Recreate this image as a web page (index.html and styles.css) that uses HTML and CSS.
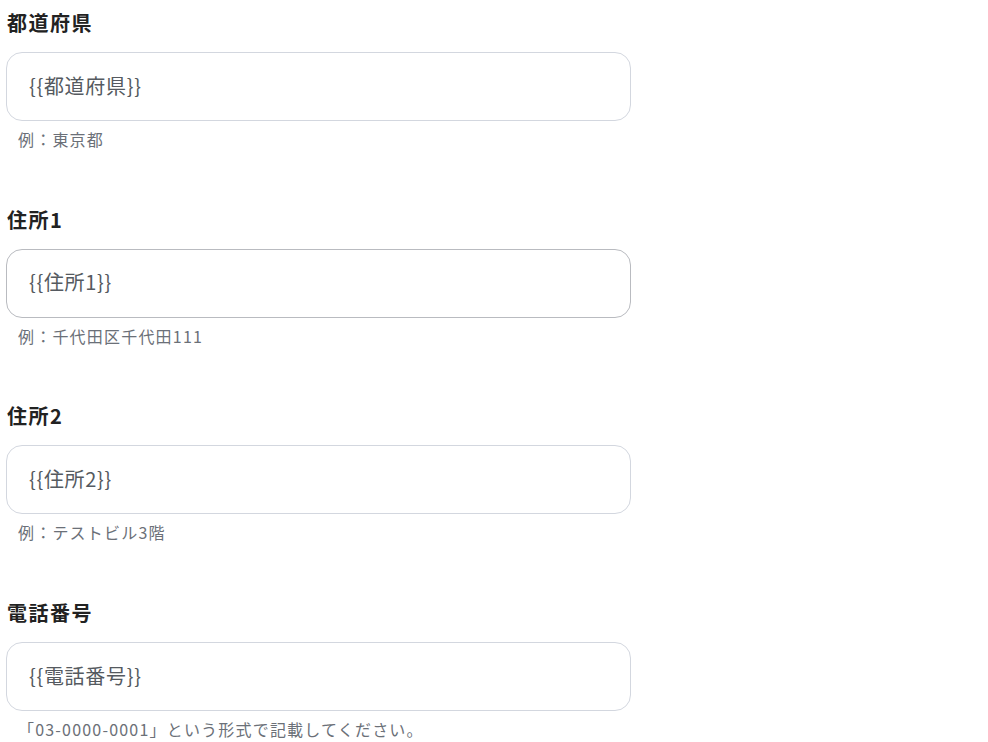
FILE: index.html
```html
<!DOCTYPE html>
<html lang="ja">
<head>
<meta charset="utf-8">
<link rel="stylesheet" href="styles.css">
</head>
<body>
<form class="form">
  <div class="field">
    <label class="label">都道府県</label>
    <div class="input">{{都道府県}}</div>
    <p class="help">例：東京都</p>
  </div>
  <div class="field">
    <label class="label">住所1</label>
    <div class="input input-hover">{{住所1}}</div>
    <p class="help">例：千代田区千代田111</p>
  </div>
  <div class="field">
    <label class="label">住所2</label>
    <div class="input">{{住所2}}</div>
    <p class="help">例：テストビル3階</p>
  </div>
  <div class="field">
    <label class="label">電話番号</label>
    <div class="input">{{電話番号}}</div>
    <p class="help">「03-0000-0001」という形式で記載してください。</p>
  </div>
</form>
</body>
</html>
```

FILE: styles.css
```css
html, body {
  margin: 0;
  padding: 0;
  background: #ffffff;
}
body {
  font-family: "Noto Sans CJK JP", "Noto Sans", sans-serif;
  color: #222222;
}
.form {
  display: flex;
  flex-direction: column;
  gap: 54.7px;
  padding: 9px 357px 0 6px;
}
.field {
  display: flex;
  flex-direction: column;
}
.label {
  display: block;
  font-size: 20px;
  font-weight: 700;
  letter-spacing: 1.5px;
  line-height: 28px;
  height: 28px;
  padding-left: 1px;
  margin-bottom: 15px;
  color: #222222;
}
.input {
  box-sizing: border-box;
  height: 69px;
  border: 1px solid #d3d7df;
  border-radius: 16px;
  padding: 0 22px 3px;
  display: flex;
  align-items: center;
  font-size: 20px;
  letter-spacing: 0.7px;
  color: #555a60;
}
.input-hover {
  border-color: #b9bbc0;
}
.help {
  margin: 6px 0 0 0;
  padding-left: 12px;
  font-size: 16px;
  letter-spacing: 1.2px;
  line-height: 24px;
  color: #6b7078;
}
```
